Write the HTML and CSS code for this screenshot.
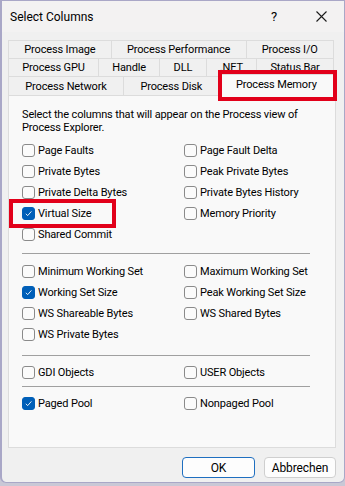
FILE: index.html
```html
<!DOCTYPE html>
<html>
<head>
<meta charset="utf-8">
<link rel="stylesheet" href="styles.css">
</head>
<body>
<div class="window">
  <div class="titlebar">
    <span class="title">Select Columns</span>
    <span class="help">?</span>
    <span class="close"><svg width="11" height="11" viewBox="0 0 11 11"><path d="M0.5 0.5L10.5 10.5M10.5 0.5L0.5 10.5" stroke="#1a1a1a" stroke-width="1.1" fill="none"/></svg></span>
  </div>
  <div class="content">
    <div class="tabs">
      <div class="tabrow">
        <div class="tab">Process Image</div>
        <div class="tab">Process Performance</div>
        <div class="tab">Process I/O</div>
      </div>
      <div class="tabrow">
        <div class="tab">Process GPU</div>
        <div class="tab">Handle</div>
        <div class="tab">DLL</div>
        <div class="tab">.NET</div>
        <div class="tab">Status Bar</div>
      </div>
      <div class="tabrow front">
        <div class="tab">Process Network</div>
        <div class="tab">Process Disk</div>
        <div class="tab selected">Process Memory<span class="mark mark-tab"></span></div>
      </div>
    </div>
    <div class="panel">
      <p class="intro">Select the columns that will appear on the Process view of<br>Process Explorer.</p>
      <div class="grid">
        <label class="cb"><span class="box"></span>Page Faults</label>
        <label class="cb"><span class="box"></span>Page Fault Delta</label>
        <label class="cb"><span class="box"></span>Private Bytes</label>
        <label class="cb"><span class="box"></span>Peak Private Bytes</label>
        <label class="cb"><span class="box"></span>Private Delta Bytes</label>
        <label class="cb"><span class="box"></span>Private Bytes History</label>
        <label class="cb marked"><span class="box on"><svg width="9" height="9" viewBox="0 0 9 9"><path d="M1.8 4.8L3.7 6.6L7.4 2.4" stroke="#fff" stroke-width="0.9" fill="none"/></svg></span>Virtual Size<span class="mark mark-cb"></span></label>
        <label class="cb"><span class="box"></span>Memory Priority</label>
        <label class="cb"><span class="box"></span>Shared Commit</label>
        <span></span>
      </div>
      <div class="sep sep1"></div>
      <div class="grid">
        <label class="cb"><span class="box"></span>Minimum Working Set</label>
        <label class="cb"><span class="box"></span>Maximum Working Set</label>
        <label class="cb"><span class="box on"><svg width="9" height="9" viewBox="0 0 9 9"><path d="M1.8 4.8L3.7 6.6L7.4 2.4" stroke="#fff" stroke-width="0.9" fill="none"/></svg></span>Working Set Size</label>
        <label class="cb"><span class="box"></span>Peak Working Set Size</label>
        <label class="cb"><span class="box"></span>WS Shareable Bytes</label>
        <label class="cb"><span class="box"></span>WS Shared Bytes</label>
        <label class="cb"><span class="box"></span>WS Private Bytes</label>
        <span></span>
      </div>
      <div class="sep sep2"></div>
      <div class="grid">
        <label class="cb"><span class="box"></span>GDI Objects</label>
        <label class="cb"><span class="box"></span>USER Objects</label>
      </div>
      <div class="sep sep3"></div>
      <div class="grid">
        <label class="cb"><span class="box on"><svg width="9" height="9" viewBox="0 0 9 9"><path d="M1.8 4.8L3.7 6.6L7.4 2.4" stroke="#fff" stroke-width="0.9" fill="none"/></svg></span>Paged Pool</label>
        <label class="cb"><span class="box"></span>Nonpaged Pool</label>
      </div>
    </div>
    <div class="buttons">
      <button class="btn default">OK</button>
      <button class="btn">Abbrechen</button>
    </div>
  </div>
</div>
</body>
</html>
```

FILE: styles.css
```css
* { box-sizing: border-box; }
html, body { margin: 0; padding: 0; }
body {
  width: 345px;
  height: 486px;
  background: #c9c8d6;
  font-family: Roboto, "Noto Sans", sans-serif;
  font-size: 11px;
  letter-spacing: -0.15px;
  color: #000;
  overflow: hidden;
}
.window {
  width: 345px;
  height: 483px;
  background: #f0f0f0;
  border: 1px solid #a9a7c7;
  border-left-width: 2px;
  border-radius: 0 0 6px 6px;
  display: flex;
  flex-direction: column;
}
.titlebar {
  height: 31px;
  display: flex;
  align-items: center;
  padding-left: 8px;
  background: #f3f2f2;
  font-size: 12px;
  letter-spacing: 0;
}
.title { flex: 1; }
.help { width: 44px; text-align: center; font-size: 13px; margin-right: 2px; }
.close { width: 46px; display: flex; justify-content: center; }
.content {
  padding: 8px 8px 0 6px;
  display: flex;
  flex-direction: column;
}
.tabs { display: flex; flex-direction: column; padding-right: 2px; }
.tabrow { display: flex; height: 18px; }
.tab {
  flex: 1 1 auto;
  text-align: center;
  line-height: 17px;
  border: 1px solid #dcdcdc;
  border-bottom: none;
  border-right: none;
  background: #f0f0f0;
  white-space: nowrap;
  position: relative;
}
.tab:last-child { border-right: 1px solid #dcdcdc; }
.tabrow.front { height: 19px; }
.tabrow.front .tab { line-height: 19px; }
.tab.selected {
  background: #f9f9f9;
  margin-top: -2px;
  height: 22px;
  line-height: 19px;
  z-index: 2;
}
.mark {
  position: absolute;
  border: 4px solid #e2001a;
  pointer-events: none;
}
.mark-tab { left: -2px; right: -4px; top: -5px; bottom: -5px; }
.panel {
  height: 353px;
  background: #f9f9f9;
  border: 1px solid #dcdcdc;
  padding: 12px 0 0 13px;
}
.intro { margin: 0 0 6px; line-height: 13px; }
.grid {
  display: grid;
  grid-template-columns: 162px 1fr;
  grid-auto-rows: 21px;
}
.cb {
  display: flex;
  align-items: center;
  gap: 3px;
  white-space: nowrap;
  position: relative;
}
.box {
  width: 13px;
  height: 13px;
  border: 1px solid #8a8a8a;
  border-radius: 3px;
  background: #fbfbfb;
  display: flex;
  align-items: center;
  justify-content: center;
  flex: none;
}
.box.on { background: #005fb8; border-color: #005fb8; }
.mark-cb { left: -13px; width: 107px; top: -4px; bottom: -4px; }
.sep { height: 1px; background: #a0a0a0; width: 288px; }
.sep1 { margin: 8px 0 7px; }
.sep2 { margin: 10px 0 6px; }
.sep3 { margin: 3px 0 6px; }
.buttons {
  display: flex;
  justify-content: flex-end;
  gap: 9px;
  padding: 9px 0 0;
}
.btn {
  font-family: inherit;
  font-size: 12px;
  letter-spacing: -0.1px;
  width: 72px;
  height: 21px;
  background: #fdfdfd;
  border: 1px solid #cfcfcf;
  border-radius: 4px;
  padding: 0;
  color: #000;
}
.btn.default { border-color: #1f6fc0; width: 73px; }
```
